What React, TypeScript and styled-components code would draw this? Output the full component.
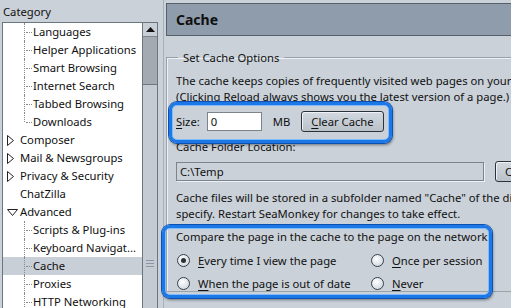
import styled, { createGlobalStyle } from 'styled-components';

const GlobalStyle = createGlobalStyle`
  html, body {
    margin: 0;
    padding: 0;
    background: #cad1d9;
  }
  body {
    font-family: 'Noto Sans', 'Open Sans', sans-serif;
    font-size: 11.25px;
    color: #101010;
  }
`;

const Window = styled.div`
  position: relative;
  width: 511px;
  height: 308px;
  overflow: hidden;
  display: flex;
  background: #cad1d9;
`;

const Sidebar = styled.div`
  width: 156px;
  flex-shrink: 0;
  display: flex;
  flex-direction: column;
  padding-left: 2px;
`;

const CategoryLabel = styled.div`
  height: 22px;
  line-height: 24px;
  padding-left: 1px;
`;

const TreeBox = styled.div`
  flex: 1;
  display: flex;
  background: #fff;
  border: 1px solid #6c7680;
  border-bottom: none;
`;

const TreeList = styled.div`
  flex: 1;
  display: flex;
  flex-direction: column;
`;

const TreeRow = styled.div<{ $level: number; $selected?: boolean }>`
  position: relative;
  height: 18px;
  flex-shrink: 0;
  line-height: 18px;
  display: flex;
  align-items: center;
  padding-left: ${(p) => (p.$level === 1 ? 30 : 4)}px;
  background: ${(p) => (p.$selected ? '#c8cfd7' : 'transparent')};
  white-space: nowrap;
`;

const Connector = styled.span<{ $last?: boolean }>`
  position: absolute;
  left: 21px;
  top: 0;
  width: 7px;
  height: ${(p) => (p.$last ? '9px' : '18px')};
  border-left: 1px dotted #8a8a8a;
  &::after {
    content: '';
    position: absolute;
    left: 1px;
    top: 9px;
    width: 6px;
    border-top: 1px dotted #8a8a8a;
  }
`;

const Twisty = styled.span`
  width: 13px;
  height: 18px;
  display: inline-flex;
  align-items: center;
  justify-content: flex-start;
  flex-shrink: 0;
`;

const Scrollbar = styled.div`
  width: 14px;
  display: flex;
  flex-direction: column;
  border-left: 1px solid #6c7680;
  background: #a8aeb6;
`;

const ScrollButton = styled.div`
  height: 13px;
  background: #c8cfd7;
  border-bottom: 1px solid #7d858e;
  display: flex;
  align-items: center;
  justify-content: center;
`;

const ScrollTrack = styled.div`
  height: 47px;
  background: #a4aab2;
`;

const ScrollThumb = styled.div`
  flex: 1;
  background: #c4cbd3;
  border-top: 1px solid #6c7680;
  display: flex;
  align-items: flex-start;
  justify-content: center;
  padding-top: 175px;
`;

const Grip = styled.div`
  width: 8px;
  height: 9px;
  background: repeating-linear-gradient(
    to bottom,
    #8a96a4 0,
    #8a96a4 1px,
    transparent 1px,
    transparent 3px
  );
`;

const Splitter = styled.div`
  width: 5px;
  flex-shrink: 0;
  border-right: 1px solid #a9b0b8;
  margin-right: 2px;
`;

const Main = styled.div`
  width: 420px;
  flex-shrink: 0;
  display: flex;
  flex-direction: column;
  padding-top: 3px;
`;

const Header = styled.div`
  height: 31px;
  border: 1px solid #56606b;
  border-right: none;
  background: #8e9cac;
  display: flex;
  align-items: center;
  padding-left: 9px;
  font-size: 14px;
  font-weight: 700;
`;

const GroupBox = styled.fieldset`
  margin: 14px 0 0 0;
  padding: 4px 0 0 9px;
  border: 1px solid #9aa2ab;
  border-right: none;
  box-shadow: inset 1px 1px 0 #eef1f4;
  height: 236px;
  min-width: 0;
`;

const Legend = styled.legend`
  padding: 0 5px;
  margin-left: 2px;
`;

const TextLine = styled.div`
  white-space: nowrap;
  line-height: 16px;
`;

const Para = styled.div<{ $top: number }>`
  margin-top: ${(p) => p.$top}px;
`;

const SizeRow = styled.div`
  display: flex;
  align-items: center;
  margin-top: 6px;
  height: 21px;
`;

const SizeInput = styled.div`
  width: 50px;
  height: 17px;
  margin-left: 7px;
  background: #fff;
  border: 1px solid #7b848d;
  line-height: 17px;
  padding-left: 3px;
`;

const Unit = styled.span`
  margin-left: 11px;
`;

const Button = styled.div`
  height: 19px;
  padding: 0 9px;
  margin-left: 11px;
  border: 1px solid #2c333a;
  border-radius: 3px;
  background: linear-gradient(#d2d8de, #b9c1c9);
  box-shadow: inset 1px 1px 0 #eef2f6;
  display: flex;
  align-items: center;
  white-space: nowrap;
`;

const FolderRow = styled.div`
  display: flex;
  align-items: center;
  margin-top: 6px;
`;

const FolderField = styled.div`
  width: 303px;
  height: 17px;
  border: 1px solid #7b848d;
  box-shadow: 1px 1px 0 #eef1f4;
  line-height: 17px;
  padding-left: 3px;
`;

const Key = styled.span`
  text-decoration: underline;
  text-underline-offset: 2px;
`;

const RadioGrid = styled.div`
  display: grid;
  grid-template-columns: 194px auto;
  row-gap: 5px;
  margin-top: 6px;
  padding-left: 1px;
`;

const RadioItem = styled.label`
  display: flex;
  align-items: center;
  gap: 8px;
  height: 18px;
  white-space: nowrap;
`;

const RadioCircle = styled.span<{ $checked?: boolean }>`
  width: 11px;
  height: 11px;
  border-radius: 50%;
  border: 1px solid #3a4148;
  background: radial-gradient(circle at 40% 35%, #ffffff, #d6dde4 70%, #b9c2cb);
  display: inline-flex;
  align-items: center;
  justify-content: center;
  &::after {
    content: '';
    width: 5px;
    height: 5px;
    border-radius: 50%;
    background: ${(p) => (p.$checked ? '#2a3036' : 'transparent')};
  }
`;

const Highlight = styled.div<{ $x: number; $y: number; $w: number; $h: number }>`
  position: absolute;
  left: ${(p) => p.$x}px;
  top: ${(p) => p.$y}px;
  width: ${(p) => p.$w}px;
  height: ${(p) => p.$h}px;
  box-sizing: border-box;
  border: 3px solid #1c78e6;
  border-radius: 8px;
  box-shadow: inset 0 0 0 1px #7fbcff, 0 0 0 1px #0d52b0, 1px 2px 3px rgba(0, 0, 0, 0.45);
  pointer-events: none;
`;

type Item = {
  label: string;
  level: number;
  twisty?: 'closed' | 'open';
  last?: boolean;
  selected?: boolean;
};

const items: Item[] = [
  { label: 'Languages', level: 1 },
  { label: 'Helper Applications', level: 1 },
  { label: 'Smart Browsing', level: 1 },
  { label: 'Internet Search', level: 1 },
  { label: 'Tabbed Browsing', level: 1 },
  { label: 'Downloads', level: 1, last: true },
  { label: 'Composer', level: 0, twisty: 'closed' },
  { label: 'Mail & Newsgroups', level: 0, twisty: 'closed' },
  { label: 'Privacy & Security', level: 0, twisty: 'closed' },
  { label: 'ChatZilla', level: 0 },
  { label: 'Advanced', level: 0, twisty: 'open' },
  { label: 'Scripts & Plug-ins', level: 1 },
  { label: 'Keyboard Navigat...', level: 1 },
  { label: 'Cache', level: 1, selected: true },
  { label: 'Proxies', level: 1 },
  { label: 'HTTP Networking', level: 1 },
];

function TwistyIcon({ open }: { open: boolean }) {
  return open ? (
    <svg width="11" height="7" viewBox="0 0 11 7">
      <path d="M0.5 0.5 H10.5 L5.5 6.5 Z" fill="#fff" stroke="#222" />
    </svg>
  ) : (
    <svg width="7" height="11" viewBox="0 0 7 11">
      <path d="M0.5 0.5 V10.5 L6.5 5.5 Z" fill="#fff" stroke="#222" />
    </svg>
  );
}

function App() {
  return (
    <Window>
      <GlobalStyle />
      <Sidebar>
        <CategoryLabel>Category</CategoryLabel>
        <TreeBox>
          <TreeList>
            {items.map((it) => (
              <TreeRow key={it.label} $level={it.level} $selected={it.selected}>
                {it.level === 1 && <Connector $last={it.last} />}
                {it.level === 0 && (
                  <Twisty>{it.twisty && <TwistyIcon open={it.twisty === 'open'} />}</Twisty>
                )}
                {it.label}
              </TreeRow>
            ))}
          </TreeList>
          <Scrollbar>
            <ScrollButton>
              <svg width="9" height="5" viewBox="0 0 9 5">
                <path d="M0 5 L4.5 0 L9 5 Z" fill="#111" />
              </svg>
            </ScrollButton>
            <ScrollTrack />
            <ScrollThumb>
              <Grip />
            </ScrollThumb>
          </Scrollbar>
        </TreeBox>
      </Sidebar>
      <Splitter />
      <Main>
        <Header>Cache</Header>
        <GroupBox>
          <Legend>Set Cache Options</Legend>
          <Para $top={4}>
            <TextLine>The cache keeps copies of frequently visited web pages on your hard disk.</TextLine>
            <TextLine>(Clicking Reload always shows you the latest version of a page.)</TextLine>
          </Para>
          <SizeRow>
            <span>
              <Key>S</Key>ize:
            </span>
            <SizeInput>0</SizeInput>
            <Unit>MB</Unit>
            <Button>
              <Key>C</Key>lear Cache
            </Button>
          </SizeRow>
          <Para $top={7}>
            <TextLine>Cache Folder Location:</TextLine>
          </Para>
          <FolderRow>
            <FolderField>C:\Temp</FolderField>
            <Button>Choose...</Button>
          </FolderRow>
          <Para $top={8}>
            <TextLine>Cache files will be stored in a subfolder named "Cache" of the directory you</TextLine>
            <TextLine>specify. Restart SeaMonkey for changes to take effect.</TextLine>
          </Para>
          <Para $top={7}>
            <TextLine>Compare the page in the cache to the page on the network:</TextLine>
          </Para>
          <RadioGrid>
            <RadioItem>
              <RadioCircle $checked />
              <span>
                <Key>E</Key>very time I view the page
              </span>
            </RadioItem>
            <RadioItem>
              <RadioCircle />
              <span>
                <Key>O</Key>nce per session
              </span>
            </RadioItem>
            <RadioItem>
              <RadioCircle />
              <span>
                <Key>W</Key>hen the page is out of date
              </span>
            </RadioItem>
            <RadioItem>
              <RadioCircle />
              <span>
                <Key>N</Key>ever
              </span>
            </RadioItem>
          </RadioGrid>
        </GroupBox>
      </Main>
      <Highlight $x={169} $y={102} $w={223} $h={41} />
      <Highlight $x={162} $y={225} $w={330} $h={73} />
    </Window>
  );
}

export default App;
